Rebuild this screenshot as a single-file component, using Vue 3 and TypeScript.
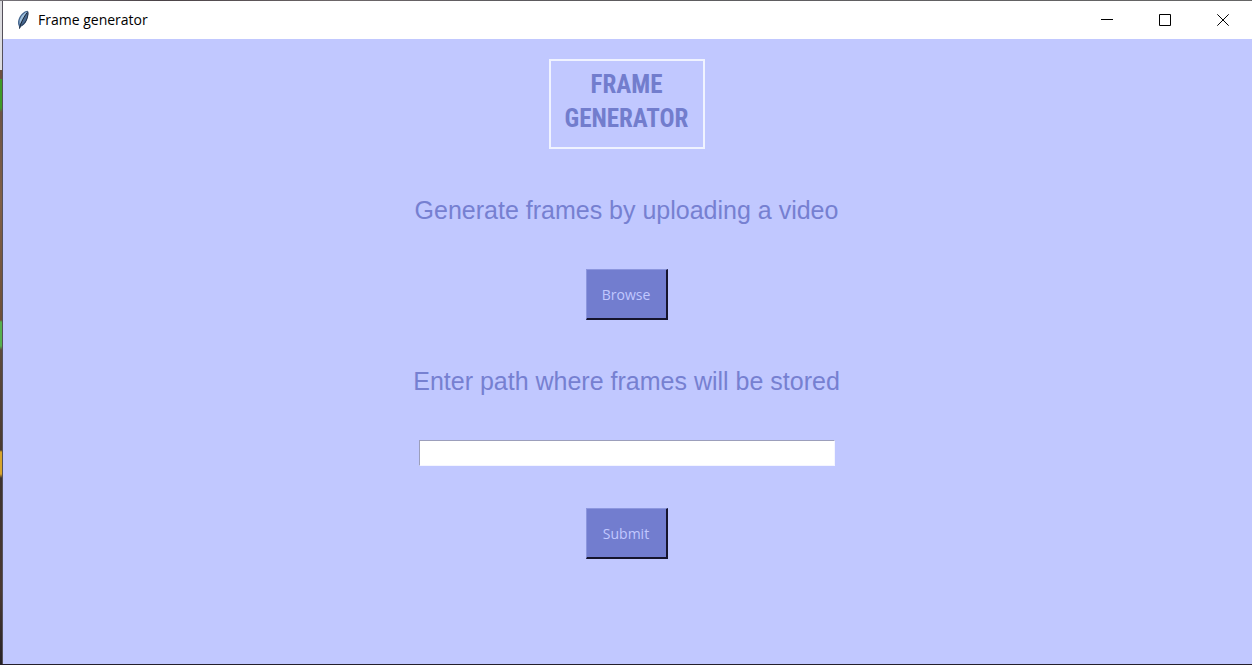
<script setup lang="ts">
import { ref } from 'vue'

const path = ref('')
</script>

<template>
  <div class="desktop">
    <div class="window">
      <header class="titlebar">
        <svg class="feather" width="14" height="20" viewBox="0 0 14 20" aria-hidden="true">
          <path d="M11.500 .8 C8 1 4 5 2.500 9.500 C1.600 12 2 14.500 2.800 16 L3.500 19 L5 16.500 C8 15.500 10.500 12 11.500 8 C12.300 5 12.800 2.500 11.500 .8 Z" fill="#46678f" />
          <path d="M11 1.800 C7.500 3 4.500 7 3.500 11 L3.600 14.500 C6 10.500 8.500 6.500 11 1.800 Z" fill="#9dbfdd" />
          <path d="M10.800 3 C8 7 5.500 11 3.500 18.500" fill="none" stroke="#1b2431" stroke-width="1" />
          <path d="M11.800 1.500 C12.600 4 11.200 10 8.700 13 L5.500 15.800" fill="none" stroke="#22324a" stroke-width="1" />
        </svg>
        <h1 class="title">Frame generator</h1>
        <div class="controls">
          <button type="button" class="control" aria-label="Minimize">
            <svg width="12" height="12" viewBox="0 0 12 12"><path d="M0 5.500H12" /></svg>
          </button>
          <button type="button" class="control" aria-label="Maximize">
            <svg width="12" height="12" viewBox="0 0 12 12"><path d="M.5 .5H11.500V11.500H.5Z" /></svg>
          </button>
          <button type="button" class="control" aria-label="Close">
            <svg width="12" height="12" viewBox="0 0 12 12"><path d="M.3 .3L11.700 11.700M11.700 .3L.3 11.700" /></svg>
          </button>
        </div>
      </header>

      <main class="content">
        <div class="logo"><span>FRAME</span><span>GENERATOR</span></div>
        <h2 class="prompt">Generate frames by uploading a video</h2>
        <button type="button" class="action">Browse</button>
        <label class="prompt" for="path">Enter path where frames will be stored</label>
        <input id="path" v-model="path" class="path" type="text" />
        <button type="button" class="action">Submit</button>
      </main>
    </div>
  </div>
</template>

<style>
body {
  margin: 0;
}
</style>

<style scoped>
.desktop {
  box-sizing: border-box;
  min-height: 100vh;
  display: flex;
  padding: 1px 0 1px 3px;
  background:
    linear-gradient(#241f2c, #241f2c) bottom / 100% 1px no-repeat,
    linear-gradient(90deg, #77747a 0, #4a4246 160px, #6d6769 340px, #5c5a5e 520px, #666 100%) top / 100% 1px no-repeat,
    linear-gradient(90deg, transparent 2px, #54505a 2px) left / 3px 100% no-repeat,
    linear-gradient(
      #dcdce0 0, #dcdce0 70px, #6d5240 70px, #6d5240 79px, #3f9a28 79px, #3f9a28 108px,
      #6d5545 112px, #806047 200px, #6d5038 320px, #56b04e 322px, #56b04e 346px,
      #5e4b3c 350px, #493a30 450px, #d7a52c 452px, #d7a52c 474px, #3d332f 478px,
      #4a3931 590px, #262226 100%
    );
}

.window {
  flex: 1;
  display: flex;
  flex-direction: column;
  background: #c1c8ff;
}

.titlebar {
  display: flex;
  align-items: center;
  height: 38px;
  padding-left: 13px;
  background: #fff;
  font-family: "Open Sans", "Noto Sans", sans-serif;
}

.title {
  flex: 1;
  margin: 0 0 0 8px;
  color: #000;
  font-size: 14px;
  font-weight: 400;
  line-height: 20px;
}

.controls {
  display: flex;
  height: 100%;
}

.control {
  display: flex;
  align-items: center;
  justify-content: center;
  width: 58px;
  padding: 0;
  border: 0;
  background: transparent;
}

.control path {
  fill: none;
  stroke: #000;
  stroke-width: 1;
}

.content {
  display: flex;
  flex-direction: column;
  align-items: center;
  padding: 20px 2px 20px 0;
}

.logo {
  box-sizing: border-box;
  display: flex;
  flex-direction: column;
  align-items: center;
  width: 156px;
  height: 90px;
  padding-top: 7px;
  border: 2px solid #f0f3ff;
  color: #727dcd;
  font-family: "Liberation Sans Narrow", "Roboto Condensed", "Open Sans Condensed", "Liberation Sans", sans-serif;
  font-size: 25px;
  font-weight: 700;
  line-height: 34px;
}

.prompt {
  margin: 44px 0 42px;
  color: #7680d1;
  font-family: "Liberation Sans", Arial, sans-serif;
  font-size: 25px;
  font-weight: 400;
  line-height: 34px;
}

.action {
  box-sizing: border-box;
  width: 82px;
  height: 51px;
  padding: 0;
  border: solid #15142c;
  border-width: 1px 2px 2px 1px;
  border-top-color: #8c96de;
  border-left-color: #8c96de;
  background: #727dcf;
  color: #c1c8ff;
  font-family: "Open Sans", "Noto Sans", sans-serif;
  font-size: 14px;
}

.path {
  box-sizing: border-box;
  width: 416px;
  max-width: 100%;
  height: 26px;
  margin-bottom: 42px;
  padding: 0 4px;
  border: 1px solid #f4f5ff;
  border-top-color: #9c9fbb;
  border-left-color: #9c9fbb;
  background: #fff;
  font-family: "Liberation Sans", Arial, sans-serif;
  font-size: 16px;
}
</style>
